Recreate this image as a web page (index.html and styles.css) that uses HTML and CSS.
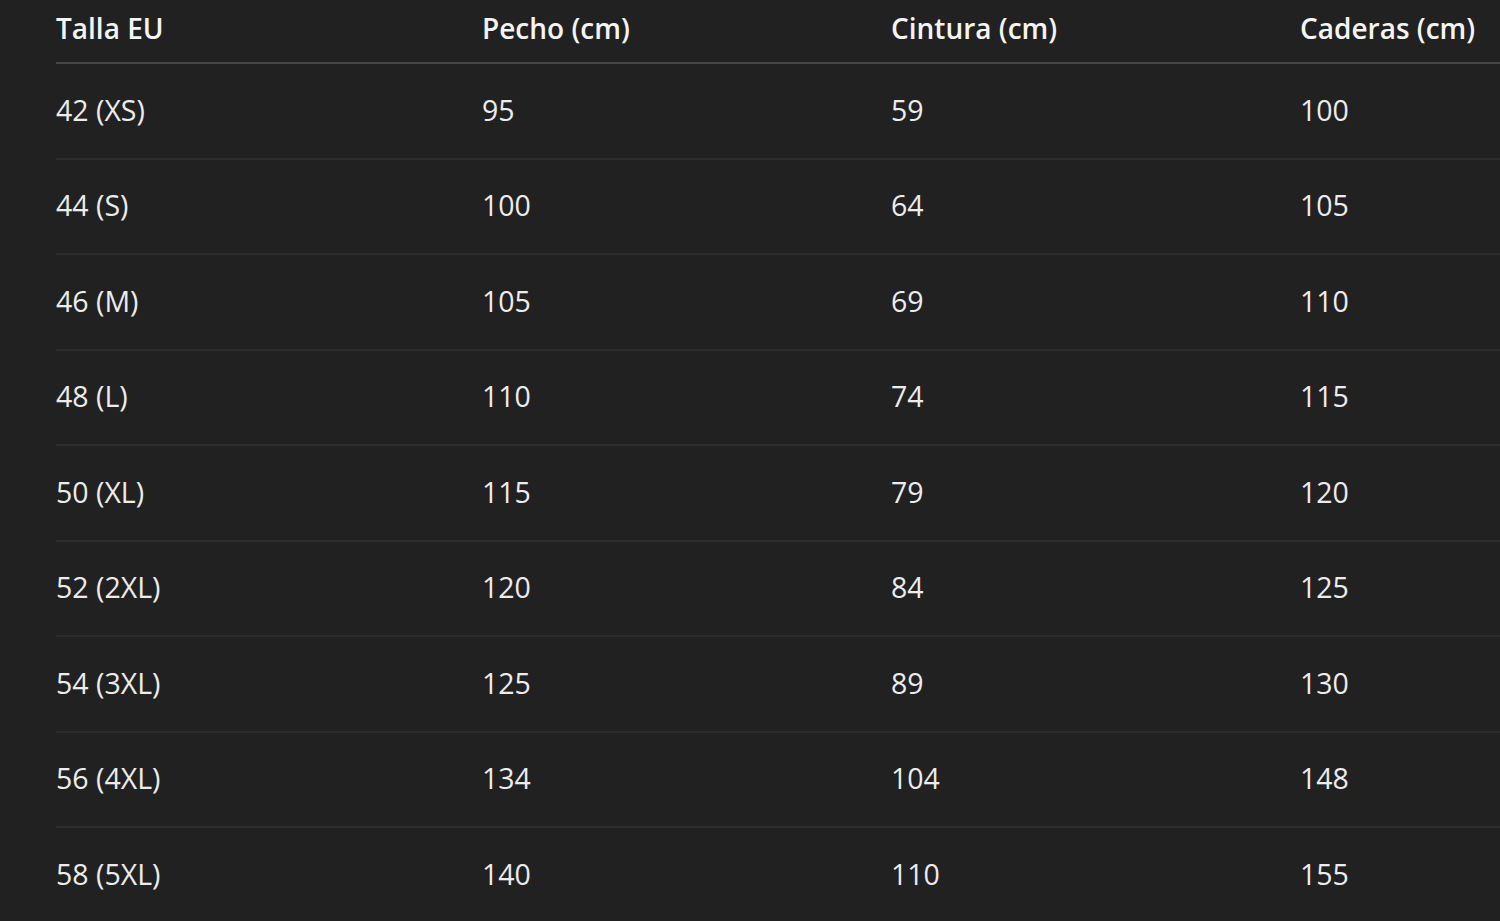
FILE: index.html
```html
<!DOCTYPE html>
<html lang="es">
<head>
<meta charset="utf-8">
<title>Tabla de tallas</title>
<link rel="stylesheet" href="styles.css">
</head>
<body>
<div class="wrap">
<table class="sizes">
  <colgroup>
    <col class="c1"><col class="c2"><col class="c3"><col class="c4">
  </colgroup>
  <thead>
    <tr><th>Talla EU</th><th>Pecho (cm)</th><th>Cintura (cm)</th><th>Caderas (cm)</th></tr>
  </thead>
  <tbody>
    <tr><td>42 (XS)</td><td>95</td><td>59</td><td>100</td></tr>
    <tr><td>44 (S)</td><td>100</td><td>64</td><td>105</td></tr>
    <tr><td>46 (M)</td><td>105</td><td>69</td><td>110</td></tr>
    <tr><td>48 (L)</td><td>110</td><td>74</td><td>115</td></tr>
    <tr><td>50 (XL)</td><td>115</td><td>79</td><td>120</td></tr>
    <tr><td>52 (2XL)</td><td>120</td><td>84</td><td>125</td></tr>
    <tr><td>54 (3XL)</td><td>125</td><td>89</td><td>130</td></tr>
    <tr><td>56 (4XL)</td><td>134</td><td>104</td><td>148</td></tr>
    <tr><td>58 (5XL)</td><td>140</td><td>110</td><td>155</td></tr>
  </tbody>
</table>
</div>
</body>
</html>
```
FILE: styles.css
```css
html, body {
  margin: 0;
  padding: 0;
  background: #212121;
  overflow: hidden;
}
.wrap {
  padding-left: 56px;
}
.sizes {
  border-collapse: collapse;
  table-layout: fixed;
  width: 1444px;
  font-family: "Open Sans", "Noto Sans", sans-serif;
  color: #ececec;
}
.c1 { width: 426px; }
.c2 { width: 409px; }
.c3 { width: 409px; }
.c4 { width: 200px; }
.sizes th {
  text-align: left;
  font-weight: 600;
  font-size: 28px;
  height: 63px;
  padding: 0 0 6px 0;
  vertical-align: middle;
  border-bottom: 2px solid #474747;
  color: #f4f4f4;
  box-sizing: border-box;
  line-height: 36px;
  white-space: nowrap;
}
.sizes td {
  font-size: 28.5px;
  font-weight: 400;
  height: 95.5px;
  padding: 0 0 2px 0;
  vertical-align: middle;
  border-bottom: 2px solid #2d2d2d;
  box-sizing: border-box;
  line-height: 36px;
}
```
